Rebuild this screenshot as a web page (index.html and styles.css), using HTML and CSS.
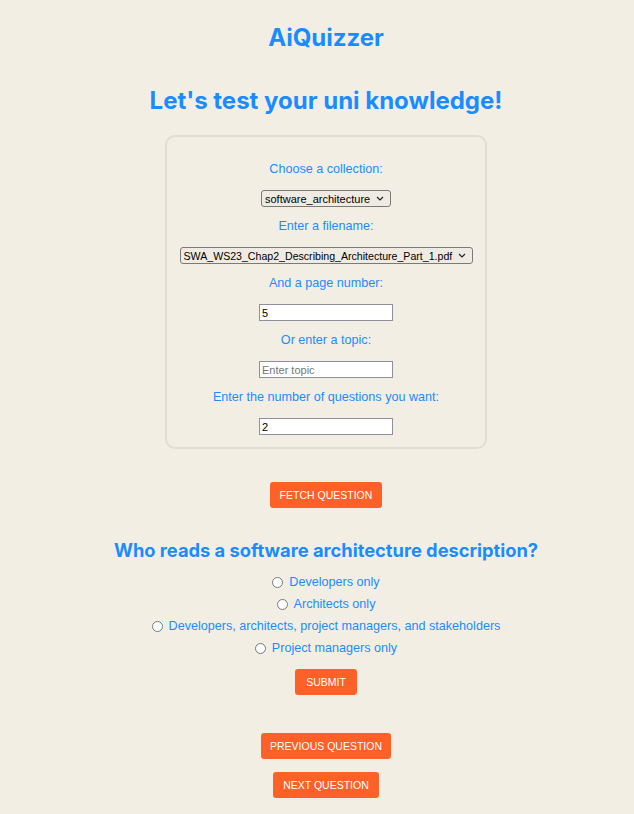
FILE: index.html
```html
<!DOCTYPE html>
<html lang="en">
<head>
<meta charset="utf-8">
<title>AiQuizzer</title>
<link rel="stylesheet" href="styles.css">
</head>
<body>
<main class="app">
  <h1 class="title">AiQuizzer</h1>
  <h2 class="subtitle">Let's test your uni knowledge!</h2>
  <form class="card">
    <label class="label">Choose a collection:</label>
    <span class="select-wrap">
      <select class="select select-collection"><option>software_architecture</option></select>
      <svg class="chevron" width="8" height="5" viewBox="0 0 8 5"><path d="M1 1l3 3 3-3" fill="none" stroke="#222" stroke-width="1.2"/></svg>
    </span>
    <label class="label">Enter a filename:</label>
    <span class="select-wrap">
      <select class="select select-file"><option>SWA_WS23_Chap2_Describing_Architecture_Part_1.pdf</option></select>
      <svg class="chevron" width="8" height="5" viewBox="0 0 8 5"><path d="M1 1l3 3 3-3" fill="none" stroke="#222" stroke-width="1.2"/></svg>
    </span>
    <label class="label">And a page number:</label>
    <input class="input" type="text" value="5">
    <label class="label">Or enter a topic:</label>
    <input class="input" type="text" placeholder="Enter topic">
    <label class="label">Enter the number of questions you want:</label>
    <input class="input last" type="text" value="2">
  </form>
  <button class="btn btn-fetch" type="button">Fetch Question</button>
  <h3 class="question">Who reads a software architecture description?</h3>
  <div class="options">
    <label class="option"><input type="radio" name="a"> Developers only</label>
    <label class="option"><input type="radio" name="a"> Architects only</label>
    <label class="option"><input type="radio" name="a"> Developers, architects, project managers, and stakeholders</label>
    <label class="option"><input type="radio" name="a"> Project managers only</label>
  </div>
  <button class="btn btn-submit" type="button">Submit</button>
  <button class="btn btn-prev" type="button">Previous Question</button>
  <button class="btn btn-next" type="button">Next Question</button>
</main>
</body>
</html>
```

FILE: styles.css
```css
html, body {
  margin: 0;
  padding: 0;
  background: #f2eee3;
}
body {
  font-family: "Liberation Sans", Tahoma, sans-serif;
  color: #1a8cff;
  padding-left: 18px;
}
.app {
  display: flex;
  flex-direction: column;
  align-items: center;
  text-align: center;
}
.title {
  font-family: Inter, "Liberation Sans", sans-serif;
  font-weight: 700;
  font-size: 24px;
  line-height: 30px;
  margin: 23px 0 0;
}
.subtitle {
  font-family: Inter, "Liberation Sans", sans-serif;
  font-weight: 700;
  font-size: 24px;
  line-height: 32px;
  margin: 32px 0 0;
}
.card {
  box-sizing: border-box;
  width: 322px;
  margin-top: 18px;
  padding: 22px 0 12px;
  border: 2px solid #e1ddd5;
  border-radius: 10px;
  display: flex;
  flex-direction: column;
  align-items: center;
}
.label {
  font-size: 12.6px;
  line-height: 20px;
  margin-bottom: 11px;
}
.select-wrap {
  position: relative;
  display: block;
  height: 17px;
  margin: 0 0 9px;
}
.chevron {
  position: absolute;
  right: 7px;
  top: 6px;
  pointer-events: none;
}
.select, .input {
  box-sizing: border-box;
  height: 17px;
  font-family: "Liberation Sans", sans-serif;
  font-size: 11px;
  color: #000;
}
.select {
  display: block;
  appearance: none;
  -webkit-appearance: none;
  border: 1px solid #7a7a7a;
  border-radius: 3px;
  background: #efebe3;
  padding: 0 14px 0 3px;
  margin: 0;
}
.select-collection { width: 130px; }
.select-file { width: 293px; font-size: 10.6px; }
.input {
  width: 134px;
  margin: 0 0 9px;
  border: 1px solid #8f8f9d;
  background: #fff;
  padding: 0 2px;
}
.input::placeholder { color: #757575; }
.input.last { margin-bottom: 0; }
.btn {
  border: none;
  border-radius: 3px;
  background: #fd6128;
  color: #fff;
  font-family: "Liberation Sans", sans-serif;
  font-size: 10.5px;
  text-transform: uppercase;
  white-space: nowrap;
  height: 26px;
  padding: 0;
  cursor: pointer;
}
.btn-fetch { margin-top: 33px; width: 112px; }
.question {
  font-family: Inter, "Liberation Sans", sans-serif;
  font-weight: 700;
  font-size: 18.3px;
  line-height: 24px;
  margin: 30px 0 0;
}
.options {
  margin-top: 9px;
  display: flex;
  flex-direction: column;
  align-items: center;
}
.option {
  font-size: 12.6px;
  line-height: 22px;
  display: flex;
  align-items: center;
}
.option input {
  margin: 0 6px 0 0;
  width: 11px;
  height: 11px;
}
.btn-submit { margin-top: 10px; width: 62px; }
.btn-prev { margin-top: 38px; width: 130px; }
.btn-next { margin-top: 13px; width: 106px; }
```
